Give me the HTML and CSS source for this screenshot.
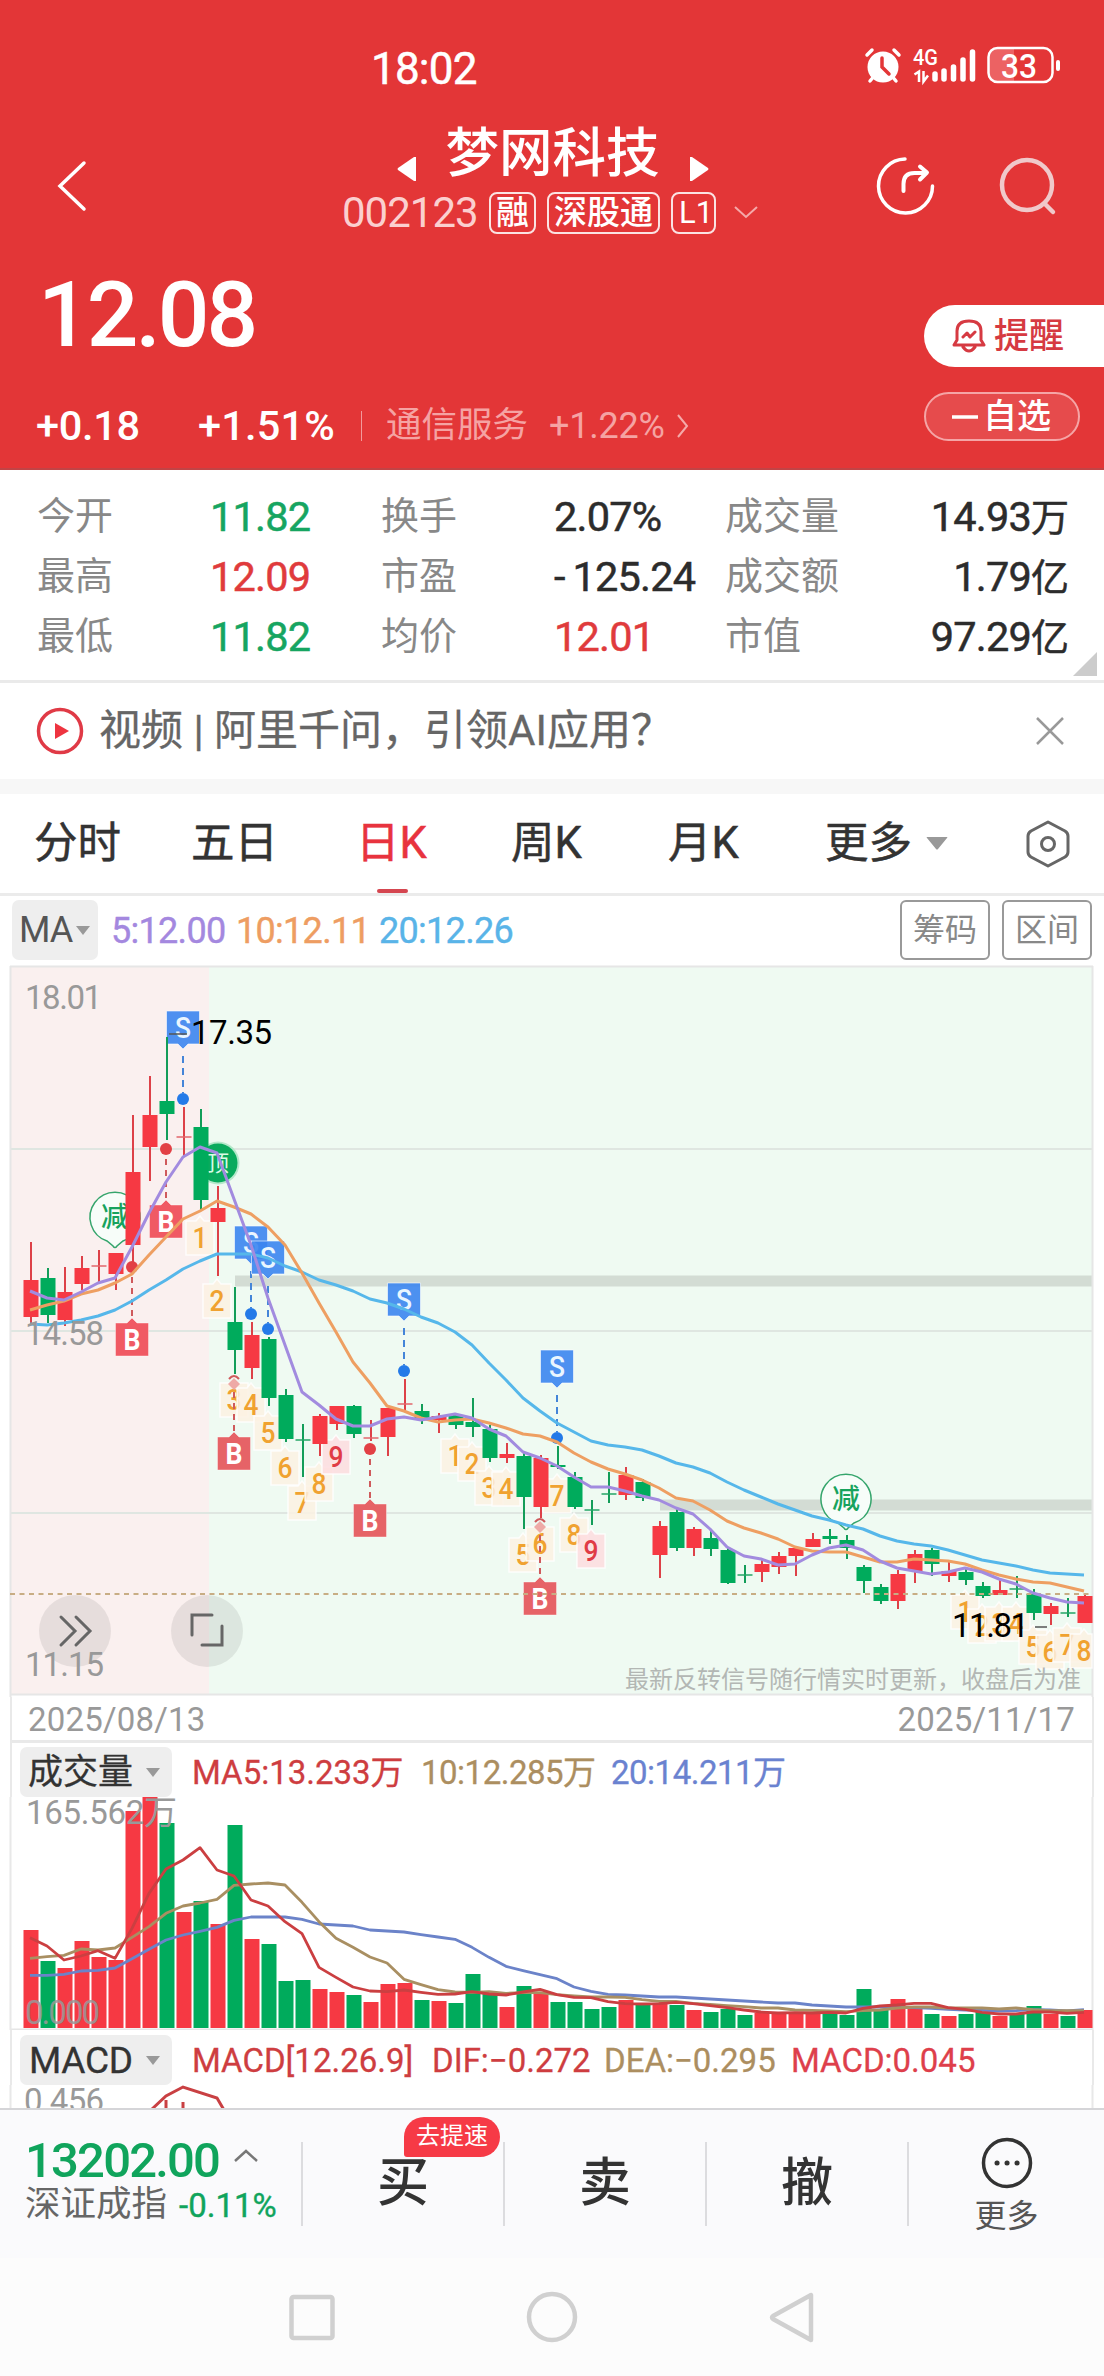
FILE: index.html
```html
<!DOCTYPE html>
<html lang="zh-CN">
<head>
<meta charset="utf-8">
<title>梦网科技 002123</title>
<link rel="stylesheet" href="styles.css">
</head>
<body>
<header class="header">
  <div class="status">
    <span class="clock">18:02</span>
    <svg class="status-icons" width="200" height="42" viewBox="862 48 200 42">
      <circle cx="883" cy="69" r="15.5" fill="#fff"/>
      <path d="M867 57l5-5M899 57l-5-5M870 83l5-6M896 83l-5-6" stroke="#fff" stroke-width="3.5" stroke-linecap="round"/>
      <path d="M882 60v9l7 7" fill="none" stroke="#e33637" stroke-width="3.5" stroke-linecap="round"/>
      <text x="913" y="67" font-size="22" textLength="25" lengthAdjust="spacingAndGlyphs" class="net">4G</text>
      <path d="M914.500 76.500l4.500-3v10.500M923.500 73v10.500l4.500-6" fill="none" stroke="#fff" stroke-width="2.500"/>
      <path d="M935 76v5M944 73v8M953.500 69v12M963 62v19M972.500 54v27" stroke="#fff" stroke-width="5.500" stroke-linecap="round"/>
      <path d="M996 50h18v34h-18q-8 0-8-8v-18q0-8 8-8z" fill="#ec6263"/>
      <rect x="988.500" y="50" width="64" height="34" rx="9" fill="none" stroke="#fff" stroke-width="2.500"/>
      <path d="M1058 64v7" stroke="#fff" stroke-width="4" stroke-linecap="round"/>
      <text x="1001" y="79.500" font-size="34" textLength="36" lengthAdjust="spacingAndGlyphs" class="net">33</text>
    </svg>
  </div>
  <div class="titlebar">
    <svg class="back" width="34" height="56" viewBox="0 0 34 56"><path d="M28 5L4 28l24 23" fill="none" stroke="#fff" stroke-width="3.500" stroke-linecap="round"/></svg>
    <div class="title">
      <div class="name-row">
        <svg width="20" height="28" viewBox="0 0 20 28"><path d="M19 2v24h-2L1 15q-1-1 0-2L17 2z" fill="#fff"/></svg>
        <h1>梦网科技</h1>
        <svg width="20" height="28" viewBox="0 0 20 28"><path d="M1 2v24h2l16-11q1-1 0-2L3 2z" fill="#fff"/></svg>
      </div>
      <div class="code-row">
        <span class="code">002123</span>
        <span class="tag">融</span><span class="tag">深股通</span><span class="tag l1">L1</span>
        <svg class="down" width="26" height="16" viewBox="0 0 26 16"><path d="M2 2l11 10L24 2" fill="none" stroke="#f5a9a9" stroke-width="2"/></svg>
      </div>
    </div>
    <svg class="tools" width="190" height="64" viewBox="872 154 190 64" fill="none" stroke-linecap="round" stroke-linejoin="round">
      <path d="M905 159a27 27 0 1 0 27.500 27" stroke="#fff" stroke-width="3.500"/>
      <path d="M903.500 191v-7q0-11 11-11h11M920 166.500l7 6-7 7" stroke="#fff" stroke-width="4"/>
      <circle cx="1027" cy="185" r="25" stroke="#f0c9ca" stroke-width="4.500"/>
      <path d="M1045 204l8 8" stroke="#f0c9ca" stroke-width="4.500"/>
    </svg>
  </div>
  <div class="quote">
    <div class="price">12.08</div>
    <div class="changes">
      <span class="chg">+0.18</span><span class="pct">+1.51%</span><i></i><span class="sector">通信服务</span><span class="sector-pct">+1.22%</span>
      <svg width="14" height="26" viewBox="0 0 14 26"><path d="M2 2l9 11-9 11" fill="none" stroke="#f5a9a9" stroke-width="2"/></svg>
    </div>
  </div>
  <div class="actions">
    <div class="remind">
      <svg width="34" height="36" viewBox="0 0 34 36" fill="none" stroke="#d63a42" stroke-width="3" stroke-linejoin="round" stroke-linecap="round"><path d="M2 27l3-5v-9Q5 3 17 3t12 10v9l3 5zM11 29q6 8 12 0M11 19l4-4 3 4 5-5"/></svg>
      <span>提醒</span>
    </div>
    <div class="fav"><svg width="28" height="4"><path d="M1 2h26" stroke="#fff" stroke-width="3.500"/></svg><span>自选</span></div>
  </div>
</header>

<section class="stats">
  <span>今开</span><b class="down-c">11.82</b><span>换手</span><b>2.07%</b><span>成交量</span><b class="end">14.93<em>万</em></b>
  <span>最高</span><b class="up-c">12.09</b><span>市盈</span><b><i class="minus">-</i>125.24</b><span>成交额</span><b class="end">1.79<em>亿</em></b>
  <span>最低</span><b class="down-c">11.82</b><span>均价</span><b class="up-c">12.01</b><span>市值</span><b class="end">97.29<em>亿</em></b>
  <svg class="corner" width="24" height="24"><path d="M24 0v24H0z" fill="#ccc"/></svg>
</section>

<section class="news">
  <svg width="48" height="48" viewBox="0 0 48 48"><circle cx="24" cy="24" r="21.500" fill="none" stroke="#e03a46" stroke-width="3.500"/><path d="M19 16v16l14-8z" fill="#ee3440"/></svg>
  <span class="news-text">视频 | 阿里千问，引领AI应用？</span>
  <svg width="28" height="28" viewBox="0 0 28 28"><path d="M1 1l26 26M27 1L1 27" stroke="#999" stroke-width="2.500"/></svg>
</section>

<nav class="tabs">
  <span>分时</span><span>五日</span><span class="on">日K</span><span>周K</span><span>月K</span>
  <span class="more">更多<svg width="22" height="13"><path d="M1 0h20q1 0 0 1L12 12q-1 1-2 0L1 1q-1-1 0-1z" fill="#999"/></svg></span>
  <svg width="48" height="50" viewBox="0 0 48 50" fill="none" stroke="#666" stroke-width="3"><path d="M24 3l17 9q3 2 3 5v16q0 3-3 5l-17 9-17-9q-3-2-3-5V17q0-3 3-5z" stroke-linejoin="round"/><circle cx="24" cy="25" r="6.500"/></svg>
</nav>

<section class="ma-row">
  <span class="chip ma-chip">MA<svg width="14" height="9"><path d="M0 0h14L7 9z" fill="#999"/></svg></span>
  <span class="ma5">5:12.00</span><span class="ma10">10:12.11</span><span class="ma20">20:12.26</span>
  <span class="btn first">筹码</span><span class="btn">区间</span>
</section>

<svg class="kline" id="kline" width="1104" height="734" viewBox="0 963 1104 734"></svg>
<div class="dates"><span>2025/08/13</span><span>2025/11/17</span></div>

<section class="panel">
  <div class="legend">
    <span class="chip">成交量<svg width="14" height="9"><path d="M0 0h14L7 9z" fill="#999"/></svg></span>
    <span class="r v1">MA5:13.233万</span><span class="t v2">10:12.285万</span><span class="b v3">20:14.211万</span>
  </div>
  <svg id="volume" width="1104" height="233" viewBox="0 1797 1104 233"></svg>
</section>
<section class="panel macd">
  <div class="legend">
    <span class="chip latin">MACD<svg width="14" height="9"><path d="M0 0h14L7 9z" fill="#999"/></svg></span>
    <span class="r m1">MACD[12.26.9]</span><span class="r m2">DIF:−0.272</span><span class="t m3">DEA:−0.295</span><span class="p m4">MACD:0.045</span>
  </div>
  <svg width="1104" height="23" viewBox="0 2085 1104 23">
    <text x="24" y="2112" class="axis" textLength="80">0.456</text>
    <path d="M152 2109l14-13 17-9 34 11 7 12M166 2100v9M183 2102v7" fill="none" stroke="#c94043" stroke-width="3"/>
    <path d="M10.500 2085v23M1092.500 2085v23" stroke="#e8e8e8" stroke-width="2"/>
  </svg>
</section>

<footer class="trade">
  <div class="index">
    <div class="index-top"><span>13202.00</span><svg width="26" height="14" viewBox="0 0 26 14"><path d="M2 12L13 2l11 10" fill="none" stroke="#777" stroke-width="2.500"/></svg></div>
    <div class="index-sub"><span>深证成指</span><b>-0.11%</b></div>
  </div>
  <div class="op">买<span class="badge">去提速</span></div>
  <div class="op">卖</div>
  <div class="op">撤</div>
  <div class="op-more">
    <svg width="52" height="52" viewBox="0 0 52 52"><circle cx="26" cy="26" r="23.500" fill="none" stroke="#333" stroke-width="3.500"/><path d="M16 26h.1M26 26h.1M36 26h.1" stroke="#333" stroke-width="5" stroke-linecap="round"/></svg>
    <span>更多</span>
  </div>
</footer>
<div class="sysnav">
  <svg width="530" height="60" viewBox="286 2288 530 60" fill="none" stroke="#d0d0d0" stroke-width="4.500" stroke-linejoin="round">
    <rect x="291.500" y="2297" width="41" height="41" rx="2"/><circle cx="552" cy="2317" r="23"/><path d="M811 2295v45l-38-21q-2-1.500 0-3z"/>
  </svg>
</div>
<script src="chart.js"></script>
</body>
</html>
```
FILE: styles.css
```css
* { box-sizing: border-box; }
body { margin: 0; width: 1104px; height: 2376px; overflow: hidden; background: #fff; color: #333; line-height: 1; font-family: Roboto, "Noto Sans CJK SC", sans-serif; }
svg { display: block; flex: none; }
b { font-weight: 400; }
em { font-style: normal; }
h1 { margin: 0; font-size: 53.500px; font-weight: 500; }
.header { position: relative; height: 470px; background: #e33637; color: #fff; border-bottom: 2px solid #c24345; }
.status { height: 110px; padding: 46px 42px 0 371px; display: flex; align-items: flex-start; justify-content: space-between; }
.clock { font-size: 44px; letter-spacing: -.8px; -webkit-text-stroke: .5px; margin-top: 1px; }
.net { fill: #fff; font-weight: 500; }
.titlebar { height: 130px; display: flex; padding: 0 42px 0 56px; }
.back { margin-top: 48px; }
.title { margin-left: 251px; width: 430px; }
.name-row { display: flex; justify-content: center; align-items: flex-start; gap: 29px; padding: 17px 0 0 0; width: 423px; }
.name-row svg { margin-top: 28px; }
.code-row { display: flex; align-items: center; margin-top: 9px; height: 42px; }
.code { width: 148px; padding-left: 1px; font-size: 42px; letter-spacing: -1px; color: #fbcfcf; }
.tag { height: 42px; line-height: 37px; border: 2.500px solid #fbe3e3; border-radius: 8px; padding: 0 5px; font-size: 33px; font-weight: 500; margin-right: 11px; white-space: nowrap; }
.tag.l1 { padding: 0 6px; width: 45px; font-size: 31px; font-weight: 400; }
.down { margin-left: 6px; }
.tools { margin-left: auto; margin-top: 44px; }
.quote { width: 700px; }
.price { padding: 30px 0 0 38px; font-size: 91px; font-weight: 500; letter-spacing: -3px; }
.changes { display: flex; align-items: center; margin-top: 45px; padding-left: 36px; height: 40px; font-size: 41.500px; font-weight: 500; letter-spacing: -.3px; white-space: nowrap; }
.chg { width: 162px; }
.pct { width: 163px; letter-spacing: .2px; }
.changes i { width: 1px; height: 30px; background: #f29a9b; margin-right: 24px; }
.sector { width: 163px; font-size: 35.500px; font-weight: 400; letter-spacing: 0; color: #f5a3a3; }
.sector-pct { width: 127px; font-size: 36px; font-weight: 400; letter-spacing: -.2px; color: #f5a3a3; }
.actions { position: absolute; top: 305px; right: 0; width: 180px; }
.remind { height: 62px; background: #fff; border-radius: 31px 0 0 31px; color: #d63a42; display: flex; align-items: center; padding-left: 28px; gap: 8px; font-size: 35px; font-weight: 500; }
.fav { width: 156px; height: 49px; margin-top: 25px; border: 2px solid #f5a5a6; border-radius: 25px; background: #e64b4c; display: flex; align-items: center; gap: 7px; padding-left: 25px; font-size: 34px; font-weight: 500; }
.fav svg { margin-right: -1px; }
.fav span { margin: -2px 0 0 -2px; }
.stats { position: relative; height: 213px; border-bottom: 3px solid #eaeaea; padding: 16px 35px 0 37px; display: grid; grid-template-columns: 173px 171px 173px 171px 150px 1fr; grid-template-rows: repeat(3, 60px); align-items: center; font-size: 38px; white-space: nowrap; }
.stats span { color: #888; }
.stats b { font-size: 41.500px; letter-spacing: -.8px; color: #2c2c2c; -webkit-text-stroke: .5px; padding-top: 1px; }
.stats em { font-size: 38px; letter-spacing: 0; }
.minus { font-style: normal; letter-spacing: 7px; }
.stats .end { text-align: right; }
.stats .up-c { color: #e03b3c; }
.stats .down-c { color: #16a561; }
.corner { position: absolute; right: 7px; bottom: 4px; }
.news { height: 96px; display: flex; align-items: center; padding: 0 40px 0 36px; font-size: 42px; color: #666; }
.news-text { margin-left: 15px; flex: 1; white-space: nowrap; -webkit-text-stroke: .3px; }
.tabs { height: 117px; border-top: 15px solid #f7f7f7; border-bottom: 3px solid #ebebeb; display: grid; grid-template-columns: 157px 165px 155px 157px 157px 196px 1fr; align-items: center; padding: 0 0 0 34px; font-size: 43.500px; color: #333; }
.tabs > svg { margin-left: 3px; }
.tabs span { height: 99px; line-height: 99px; position: relative; white-space: nowrap; -webkit-text-stroke: .5px; }
.tabs .on { color: #e8333e; }
.tabs .on::after { content: ""; position: absolute; left: 21px; bottom: 0; width: 31px; height: 4px; border-radius: 2px; background: #d54650; }
.tabs .more { display: flex; align-items: center; gap: 14px; }
.ma-row { height: 67px; padding: 4px 12px 0; display: flex; align-items: flex-start; font-size: 36px; white-space: nowrap; line-height: 60px; }
.chip { background: #eee; border-radius: 7px; display: flex; align-items: center; justify-content: space-between; }
.ma-chip { width: 86px; height: 60px; padding: 0 8px 0 7px; font-size: 36px; letter-spacing: -1px; color: #555; margin-right: 13px; }
.ma5 { color: #a488df; width: 125px; }
.ma10 { color: #ee9d62; width: 143px; }
.ma20 { color: #59b4e8; }
.ma5, .ma10, .ma20 { letter-spacing: -.7px; padding-top: 1px; -webkit-text-stroke: .4px; }
.btn { width: 90px; height: 60px; line-height: 56px; border: 2px solid #999; border-radius: 6px; color: #888; font-size: 32px; text-align: center; margin-left: 12px; }
.first { margin-left: auto; }
.kline text, .panel text { font-family: Roboto, "Noto Sans CJK SC", sans-serif; }
.axis { font-size: 33px; fill: #999; }
.dates { height: 46px; margin: 0 10px; border: solid #e9e9e9; border-width: 0 2px 3px; padding: 6px 17px 0 16px; display: flex; justify-content: space-between; font-size: 33px; letter-spacing: .2px; color: #999; }
.panel { height: 287px; position: relative; }
.legend { height: 54px; margin: 0 10px; padding: 4px 0 0 8px; border: solid #e9e9e9; border-width: 0 2px; display: flex; font-size: 33px; line-height: 51px; white-space: nowrap; -webkit-text-stroke: .3px; }
.legend .chip { width: 152px; height: 50px; font-size: 35px; color: #333; padding: 0 12px 0 8px; margin-right: 20px; }
.legend .latin { font-size: 37px; letter-spacing: -.3px; padding-left: 9px; }
.macd { height: 78px; }
.macd .legend { height: 55px; padding-top: 5px; }
.r { color: #ce3d40; } .t { color: #ac8e60; } .b { color: #6a82d0; } .p { color: #de3f4b; }
.v1 { width: 229px; } .v2 { width: 190px; letter-spacing: -.5px; } .v3 { letter-spacing: -.5px; }
.m1 { width: 240px; } .m2 { width: 172px; } .m3 { width: 187px; }
.trade { height: 150px; border-top: 2px solid #d5d5d8; background: #fafafc; display: flex; padding-top: 32px; }
.index { width: 301px; padding-left: 25px; }
.index-top { display: flex; gap: 14px; color: #10a45c; font-size: 49px; letter-spacing: -1.800px; font-weight: 500; height: 42px; line-height: 38px; }
.index-top svg { margin-top: 7px; }
.index-sub { display: flex; align-items: center; gap: 12px; margin-top: 3px; color: #666; font-size: 35.500px; white-space: nowrap; }
.index-sub b { color: #10a45c; font-size: 33px; -webkit-text-stroke: .4px; padding-top: 2px; }
.op { position: relative; width: 202px; height: 84px; border-left: 2px solid #dcdcdf; text-align: center; font-size: 52px; font-weight: 500; line-height: 83px; }
.badge { position: absolute; left: 101px; top: -25px; width: 96px; height: 40px; border-radius: 20px 20px 20px 3px; background: #f63a46; color: #fff; font-size: 24px; line-height: 38px; font-weight: 400; }
.op-more { flex: 1; height: 84px; border-left: 2px solid #dcdcdf; display: flex; flex-direction: column; align-items: center; font-size: 32px; color: #555; gap: 11px; }
.op-more svg { margin-top: -5px; }
.sysnav { height: 118px; background: #fcfcfc; padding: 30px 0 0 286px; }
```
FILE: chart.js
```js
const RED = '#f63943', GREEN = '#00ab5c';
const cx = i => 31 + 17 * i;

// [colour, body top, body bottom, wick top, wick bottom]
const candles = [
['r',1280,1317,1242,1323],['g',1278,1315,1268,1323],['r',1292,1320,1267,1326],['r',1268,1284,1256,1290],['r',1266,1266,1250,1282],
['r',1253,1274,1253,1290],['r',1172,1245,1115,1262],['r',1115,1147,1076,1181],['g',1101,1114,1037,1140],['r',1137,1137,1107,1157],
['g',1127,1200,1109,1211],['r',1208,1222,1186,1276],['g',1322,1350,1287,1374],['r',1335,1368,1322,1379],['g',1339,1398,1337,1406],
['g',1395,1439,1389,1442],['g',1440,1440,1424,1477],['r',1416,1444,1414,1456],['r',1406,1424,1406,1430],['g',1406,1434,1405,1438],
['r',1438,1438,1420,1441],['r',1408,1437,1408,1456],['r',1404,1404,1379,1410],['g',1411,1420,1404,1424],['r',1416,1420,1413,1433],
['g',1415,1425,1415,1429],['g',1422,1427,1398,1437],['g',1429,1458,1425,1462],['r',1454,1458,1443,1463],['g',1456,1497,1453,1529],
['r',1458,1507,1455,1518],['g',1465,1467,1446,1469],['g',1477,1507,1472,1509],['g',1510,1510,1500,1525],['g',1494,1494,1472,1503],
['r',1475,1495,1467,1500],['g',1482,1498,1479,1501],['r',1526,1555,1521,1578],['g',1512,1548,1509,1551],['r',1529,1548,1527,1556],
['g',1538,1549,1531,1556],['g',1550,1583,1547,1584],['g',1575,1575,1565,1583],['r',1564,1572,1560,1582],['r',1556,1567,1552,1574],
['r',1548,1556,1548,1576],['r',1539,1547,1533,1547],['g',1536,1539,1529,1544],['g',1540,1548,1535,1559],['g',1567,1581,1565,1593],
['g',1587,1601,1584,1604],['r',1574,1601,1570,1609],['r',1554,1571,1550,1583],['g',1550,1564,1548,1576],['r',1571,1576,1562,1582],
['g',1572,1580,1569,1585],['g',1586,1596,1582,1598],['r',1590,1595,1580,1595],['g',1589,1589,1576,1598],['g',1594,1613,1589,1620],
['r',1606,1614,1603,1625],['g',1613,1613,1598,1617],['r',1596,1623,1594,1623]];

const ma5 = [1291,1298,1300,1292,1283,1278,1247,1213,1182,1157,1147,1153,1199,1245,1298,1345,1392,1405,1419,1426,1426,1419,1417,1420,1417,1414,1418,1429,1436,1452,1458,1466,1477,1487,1487,1491,1496,1500,1508,1514,1529,1547,1556,1559,1565,1564,1555,1548,1545,1550,1561,1568,1571,1574,1572,1568,1572,1579,1584,1593,1598,1602,1603];
const ma10 = [1310,1305,1301,1294,1290,1283,1274,1255,1237,1219,1211,1201,1207,1214,1227,1245,1273,1303,1332,1362,1383,1406,1411,1418,1422,1420,1419,1423,1428,1434,1436,1442,1453,1462,1469,1474,1480,1488,1498,1501,1510,1521,1528,1533,1539,1547,1551,1552,1552,1557,1562,1562,1559,1560,1561,1564,1570,1575,1579,1582,1583,1587,1591];
const ma20 = [1324,1325,1323,1320,1316,1310,1301,1290,1280,1269,1261,1254,1254,1254,1258,1266,1272,1280,1285,1291,1299,1303,1309,1317,1323,1332,1345,1363,1380,1398,1411,1423,1432,1441,1445,1447,1450,1456,1463,1467,1473,1482,1490,1497,1504,1510,1516,1520,1525,1529,1536,1541,1544,1546,1550,1555,1560,1563,1566,1570,1573,1574,1575];

const line = (ys, color, w = 3) =>
  `<polyline points="${ys.map((y, i) => (cx(i) - 1) + ',' + y).join(' ')}" fill="none" stroke="${color}" stroke-width="${w}" stroke-linejoin="round"/>`;

let k = '';
k += '<rect x="11" y="966" width="198" height="728" fill="#faf0ef"/><rect x="209" y="966" width="883" height="728" fill="#effaf2"/>';
k += '<path d="M235 1281H1092M660 1505H1092" stroke="#d3dcd4" stroke-width="11"/>';
k += '<path d="M11 1149H1092M11 1331H1092M11 1513H1092" stroke="#dfe6e1" stroke-width="2"/>';
k += '<path d="M10 966.500H1093M10 1694.500H1093M10.500 966V1697M1092.500 966V1697" stroke="#e6e6e6" stroke-width="2"/>';

// sequence-count tags: [index, box top, label]
const tags = [[10,1221,1],[11,1284,2],[12,1383,3],[13,1388,4],[14,1416,5],[15,1451,6],[16,1486,7],[17,1467,8],[18,1440,9],
[25,1439,1],[26,1447,2],[27,1471,3],[28,1472,4],[29,1538,5],[30,1527,6],[31,1479,7],[32,1518,8],[33,1534,9],
[55,1595,1],[56,1609,2],[57,1607,3],[58,1607,4],[59,1630,5],[60,1635,6],[61,1628,7],[62,1634,8]];
for (const [i, y, n] of tags) {
  const x = cx(i) - 1, w = Math.min(14, 1092 - x), nine = n === 9;
  k += `<path d="M${x - 14} ${y}h10l4-5 4 5h${w - 4}v34h-${w + 14}z" fill="${nine ? '#fddcdf' : '#fcf1e3'}" fill-opacity=".85" stroke="#fff" stroke-opacity=".8" stroke-width="1.5"/>`;
  k += `<text x="${x}" y="${y + 27}" font-size="30" text-anchor="middle" font-weight="500" textLength="15" lengthAdjust="spacingAndGlyphs" fill="${nine ? '#e03b46' : '#f0a230'}">${n}</text>`;
}

// sell flags: [index, box top, dot y]
for (const [i, y, d] of [[9,1011,1099],[13,1226,1314],[14,1241,1329],[22,1283,1371],[31,1350,1438]]) {
  const x = cx(i) - 1;
  k += `<path d="M${x} ${y + 45}V${d - 6}" stroke="#4485d8" stroke-width="2" stroke-dasharray="7 5"/><circle cx="${x}" cy="${d}" r="6" fill="#247ae8"/>`;
  k += `<path d="M${x - 16.5} ${y}h33v33h-11.5l-5 5-5-5h-11.5z" fill="#3b85ef" fill-opacity=".9" stroke="#fff" stroke-opacity=".6"/><text x="${x}" y="${y + 26.5}" font-size="29" font-weight="500" text-anchor="middle" textLength="16" lengthAdjust="spacingAndGlyphs" fill="#eaf6ff">S</text>`;
}
// buy flags
for (const [i, y, d] of [[6,1323,1267],[8,1205,1149],[12,1437,1382],[20,1504,1449],[30,1582,1525]]) {
  const x = cx(i) - 1, diamond = i === 12 || i === 30;
  k += `<path d="M${x} ${d + 10}V${y - 6}" stroke="#cf5a5c" stroke-width="2" stroke-dasharray="6 5"/>`;
  k += diamond ? `<path d="M${x - 5} ${d - 3}q5-6 10 0" fill="none" stroke="#cf5a5c" stroke-width="2"/><path d="M${x} ${d - 4}l6 6-6 6-6-6z" fill="#eeaaa6"/>` : `<circle cx="${x}" cy="${d}" r="6" fill="#e24045"/>`;
  k += `<path d="M${x - 16.5} ${y}h11.5l5-5 5 5h11.5v33h-33z" fill="${i < 9 ? '#f05a64' : '#e66367'}" stroke="#fff" stroke-opacity=".4"/><text x="${x}" y="${y + 27}" font-size="29" font-weight="700" text-anchor="middle" textLength="17" lengthAdjust="spacingAndGlyphs" fill="#fff">B</text>`;
}
// reduce-position balloons
for (const [x, y] of [[115,1217],[846,1499]]) {
  k += `<path d="M${x - 8} ${y + 24}A25 25 0 1 1 ${x + 8} ${y + 24}l-6 5q-2 3-4 0z" fill="#f7fdf9" stroke="#35a56c" stroke-width="1.5"/>`;
  k += `<text x="${x}" y="${y + 10}" font-size="28" text-anchor="middle" font-weight="500" fill="#17a35d">减</text>`;
}
k += '<circle cx="218" cy="1163" r="21.500" fill="#b5e8cb"/><circle cx="218" cy="1163" r="19.500" fill="#09aa5d"/><text x="218" y="1171" font-size="22" text-anchor="middle" fill="#d8fbe6">顶</text>';

candles.forEach(([c, t, b, wt, wb], i) => {
  const x = cx(i), col = c === 'r' ? RED : GREEN;
  k += `<path d="M${x} ${wt}V${wb}" stroke="${c === 'r' ? '#dd4148' : '#139d59'}" stroke-width="2"/>`;
  k += t === b ? `<path d="M${x - 7.500} ${t}h15" stroke="${c === 'r' ? '#e2666b' : '#25a566'}" stroke-width="1.500"/>`
    : `<rect x="${x - 7.500}" y="${t}" width="15" height="${b - t}" fill="${col}"/>`;
});
k += '<path d="M10 1594H1092" stroke="#c8ad84" stroke-width="2" stroke-dasharray="5 4.500"/>';
k += line(ma20, '#56b7ea') + line(ma10, '#ee9f62') + line(ma5, '#a28bdf');
k += '<path d="M169 1034h18M1035 1627h12" stroke="#555" stroke-width="1.500"/>';
const label = (x, y, s, len, fill = '#999', size = 33) => `<text x="${x}" y="${y}" font-size="${size}" textLength="${len}" fill="${fill}">${s}</text>`;
k += label(191, 1043.5, '17.35', 81, '#000') + label(952, 1637, '11.81', 77, '#000');
k += '<g fill="#000" fill-opacity=".08"><circle cx="75" cy="1631" r="36"/><circle cx="207" cy="1631" r="36"/></g>';
k += '<path d="M61 1617l14 14-14 14M76 1617l14 14-14 14M192 1635v-20h20M222 1626v19h-20" fill="none" stroke="#666" stroke-width="3" stroke-linecap="round"/>';
k += label(25, 1009, '18.01', 77) + label(25, 1345, '14.58', 79) + label(25, 1676, '11.15', 79);
k += label(625, 1688, '最新反转信号随行情实时更新，收盘后为准', 456, '#b3b7b4', 24);
document.getElementById('kline').innerHTML = k;

const vol = [1930,1961,1968,1941,1957,1960,1811,1797,1823,1912,1901,1924,1825,1939,1944,1981,1980,1989,1992,1995,2002,1984,1983,2000,2001,2003,1974,1992,2007,1986,1994,2002,2002,2009,2007,2000,2005,2003,2005,2010,2012,2009,2015,2013,2014,2012,2013,2013,2015,1989,2010,1999,2008,2014,2016,2014,2012,2016,2013,2006,2014,2016,2010];
// averages are stored in thirds of a pixel below y = 1740
const v5 = [593,618,660,648,632,655,565,460,387,360,323,390,408,480,498,545,581,682,712,741,753,755,750,757,763,762,755,762,765,756,748,764,772,773,785,791,792,791,787,791,797,803,810,816,819,818,819,817,819,805,798,795,790,790,803,808,817,822,822,816,816,820,817];
const v10 = [655,650,646,627,630,624,592,560,520,498,489,478,436,432,429,435,487,545,595,622,651,669,718,734,749,756,757,755,760,758,758,764,768,771,771,772,779,784,784,790,793,797,800,804,804,810,811,813,815,812,810,804,801,801,804,804,804,807,804,809,812,812,812];
const v20 = [706,706,703,693,691,684,656,628,600,585,574,562,541,531,531,531,538,552,555,558,570,573,576,584,591,598,622,652,679,692,704,716,741,754,763,765,768,771,771,774,777,780,783,786,789,789,795,798,801,801,801,803,803,805,808,810,811,813,812,809,810,813,809];
const px = a => a.map(v => 1740 + v / 3);
let v = '<path d="M10 2029.500H1093" stroke="#e6e6e6" stroke-width="2"/><path d="M10.500 1796V2030M1092.500 1796V2030" stroke="#e8e8e8" stroke-width="2"/>';
vol.forEach((t, i) => { v += `<rect x="${cx(i) - 7.500}" y="${t}" width="15" height="${2028 - t}" fill="${candles[i][0] === 'r' ? RED : GREEN}"/>`; });
v += line(px(v20), '#6b83c9', 2.8) + line(px(v10), '#a98f62', 2.8) + line(px(v5), '#cb3f41', 2.8);
v += label(26, 1824, '165.562万', 151, '#999') + `<g opacity=".85">${label(25, 2024, '0.000', 75)}</g>`;
document.getElementById('volume').innerHTML = v;
```
